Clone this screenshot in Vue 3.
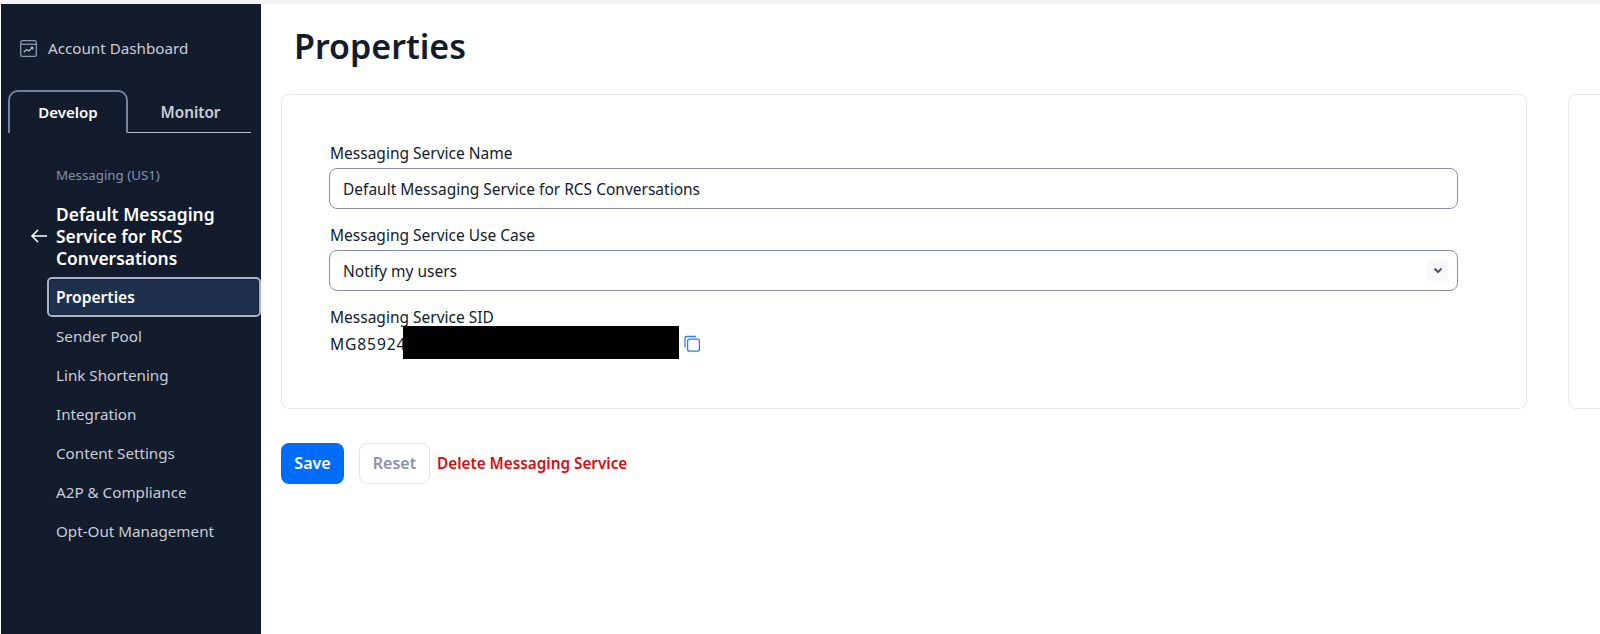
<script setup>
const items = ['Sender Pool', 'Link Shortening', 'Integration', 'Content Settings', 'A2P & Compliance', 'Opt-Out Management']
</script>

<template>
  <div class="page">
    <div class="strip"></div>
    <div class="body">
      <aside class="side">
        <div class="dash">
          <svg width="19" height="19" viewBox="0 0 18 18" fill="none" stroke="#8b9bb4" stroke-width="1.2">
            <rect x="1.6" y="1.6" width="14.8" height="14.8" rx="1.8" />
            <path d="M1.6 5h14.8" />
            <path d="M4.5 12.5l2.8-2.6 2 1.4 3.6-3.3M11 8h2v2" stroke="#aeb9cb" />
          </svg>
          <span>Account Dashboard</span>
        </div>
        <div class="tabs">
          <div class="tab active">Develop</div>
          <div class="tab other">Monitor</div>
        </div>
        <div class="crumb">Messaging (US1)</div>
        <div class="service">
          <svg class="arrow" width="18" height="14" viewBox="0 0 18 14" fill="none" stroke="#fff" stroke-width="1.6">
            <path d="M17 7H2M8 1L2 7l6 6" />
          </svg>
          <div>Default Messaging Service for RCS Conversations</div>
        </div>
        <div class="current">Properties</div>
        <nav class="nav">
          <div v-for="item in items" :key="item" class="item">{{ item }}</div>
        </nav>
      </aside>
      <main class="main">
        <h1>Properties</h1>
        <div class="cards">
          <section class="card">
            <label>Messaging Service Name</label>
            <div class="field">Default Messaging Service for RCS Conversations</div>
            <label class="l2">Messaging Service Use Case</label>
            <div class="field select">
              <span>Notify my users</span>
              <span class="chev">
                <svg width="10" height="7" viewBox="0 0 10 7" fill="none" stroke="#4b5671" stroke-width="2"><path d="M1.5 1.5L5 5l3.5-3.5" /></svg>
              </span>
            </div>
            <label class="l3">Messaging Service SID</label>
            <div class="sid">
              <span class="sidtext">MG85924</span>
              <span class="redact"></span>
              <svg class="copy" width="18" height="18" viewBox="0 0 18 18" fill="none" stroke="#2f7cf6" stroke-width="1.3">
                <path d="M2 12.5V3.2C2 2 2.6 1.5 3.6 1.5H13" />
                <rect x="4.6" y="4.2" width="11.8" height="12" rx="2" />
              </svg>
            </div>
          </section>
          <section class="card ghost"></section>
        </div>
        <div class="actions">
          <button class="save">Save</button>
          <button class="reset">Reset</button>
          <span class="del">Delete Messaging Service</span>
        </div>
      </main>
    </div>
  </div>
</template>

<style scoped>
.page {
  width: 1600px;
  height: 634px;
  overflow: hidden;
  background: #fff;
  font-family: "Noto Sans", sans-serif;
  font-size: 15.2px;
  color: #121c2d;
}
.strip { height: 4px; background: #f4f4f6; }
.body { display: flex; height: 630px; }
.side {
  width: 260px;
  margin-left: 1px;
  flex: none;
  background: #121c2d;
  color: #cacdd8;
  box-sizing: border-box;
  padding-top: 33px;
}
.dash {
  display: flex;
  align-items: center;
  gap: 10px;
  padding-left: 18px;
  height: 22px;
  color: #cacdd8;
}
.tabs {
  display: flex;
  margin: 31px 0 0 7px;
  width: 243px;
  height: 43px;
}
.tab {
  display: flex;
  align-items: center;
  justify-content: center;
  font-weight: 600;
  box-sizing: border-box;
  font-size: 15px;
}
.active {
  width: 120px;
  color: #fff;
  border: 2px solid #76859f;
  border-bottom: none;
  border-radius: 10px 10px 0 0;
  padding-bottom: 2px;
}
.other {
  flex: 1;
  color: #cacdd8;
  border-bottom: 1px solid #b8c0ce;
  font-size: 15.3px;
  padding: 2px 0 0 2px;
}
.crumb {
  margin: 33px 0 0 55px;
  font-size: 13.3px;
  line-height: 18px;
  color: #8891aa;
}
.service {
  position: relative;
  margin: 19px 0 0 55px;
  width: 175px;
  color: #fff;
  font-weight: 600;
  font-size: 17.4px;
  line-height: 22px;
}
.arrow { position: absolute; left: -26px; top: 26px; }
.current {
  margin: 8px 0 0 46px;
  height: 40px;
  box-sizing: border-box;
  border: 2px solid #aab4c6;
  border-radius: 5px;
  box-shadow: inset 0 0 0 1px #16233a;
  background: #1f304c;
  color: #fff;
  font-weight: 600;
  font-size: 15.6px;
  padding-left: 7px;
  display: flex;
  align-items: center;
}
.nav { margin-top: -1px; }
.item {
  height: 39px;
  display: flex;
  align-items: center;
  padding-left: 55px;
  color: #cacdd8;
}
.main { flex: 1; min-width: 0; padding-left: 20px; }
h1 {
  margin: 0 0 0 13px;
  font-size: 34px;
  line-height: 46px;
  padding-top: 19px;
  font-weight: 600;
  color: #121c2d;
}
.cards { display: flex; gap: 41px; margin-top: 25px; }
.card {
  width: 1246px;
  height: 315px;
  flex: none;
  box-sizing: border-box;
  border: 1px solid #e8e8ef;
  border-radius: 8px;
  padding: 47px 47px 0;
}
.ghost { width: 200px; }
label { display: block; font-size: 15.5px; line-height: 22px; padding-left: 1px; }
.field {
  height: 41px;
  width: 1129px;
  box-sizing: border-box;
  border: 1px solid #8891aa;
  border-radius: 8px;
  margin-top: 4px;
  padding: 0 13px;
  display: flex;
  align-items: center;
  font-size: 15.5px;
}
.select { justify-content: space-between; padding-right: 9px; }
.chev {
  width: 21px;
  height: 21px;
  border-radius: 4px;
  background: #f8f8fa;
  display: flex;
  align-items: center;
  justify-content: center;
}
.l2 { margin-top: 15px; }
.l3 { margin-top: 15px; }
.sid { display: flex; align-items: center; height: 34px; margin-top: -1px; }
.sidtext { width: 74px; flex: none; white-space: nowrap; font-size: 15.6px; letter-spacing: 0.9px; padding-left: 1px; box-sizing: border-box; }
.redact { width: 276px; height: 33px; background: #000; flex: none; margin-bottom: 4px; }
.copy { margin-left: 4px; }
.actions { display: flex; align-items: center; margin-top: 34px; }
button {
  font-family: inherit;
  font-size: 16px;
  font-weight: 600;
  height: 41px;
  border-radius: 8px;
  box-sizing: border-box;
  cursor: pointer;
  padding: 0 0 2px;
}
.save { width: 63px; background: #006dfa; color: #fff; border: none; }
.reset { width: 71px; margin-left: 15px; background: #fff; color: #8891aa; border: 1px solid #e1e3ea; }
.del { margin-left: 7px; color: #d40d12; font-weight: 600; font-size: 15.3px; padding-bottom: 2px; }
</style>

<style>
html, body { margin: 0; background: #fff; }
</style>
